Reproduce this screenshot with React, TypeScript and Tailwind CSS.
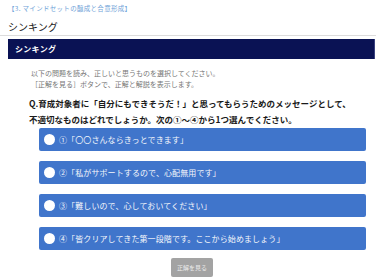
import React from "react";

// ── Data ────────────────────────────────────────────────────────────────────
const OPTIONS = [
  "①「〇〇さんならきっとできます」",
  "②「私がサポートするので、心配無用です」",
  "③「難しいので、心しておいてください」",
  "④「皆クリアしてきた第一段階です。ここから始めましょう」",
];

const FONT = { fontFamily: '"Noto Sans CJK JP", "Noto Sans", sans-serif' };

// ── Component ───────────────────────────────────────────────────────────────
export default function App() {
  return (
    <div className="w-[384px] h-[280px] bg-white overflow-hidden text-[#222]" style={FONT}>
      {/* breadcrumb + title */}
      <div className="pt-[4px] pl-[8px] text-[6.5px] leading-[8px] text-[#6fa3d8] tracking-[0.3px] whitespace-nowrap">
        【3. マインドセットの醸成と合意形成】
      </div>
      <div className="mt-[9px] pl-[8px] text-[10px] leading-[12px] text-[#1a1a1a]">シンキング</div>
      <div className="mt-[2px] w-[376px] h-px bg-[#dcdcdc]" />

      {/* section header */}
      <div className="mt-[3px] ml-[8px] w-[367px] h-[20px] flex items-center pl-[7px] bg-[#0a1254] border-r border-[#3b4280]">
        <span className="text-[8px] font-bold text-white tracking-[0.3px]">シンキング</span>
      </div>

      {/* instructions */}
      <div className="mt-[9px] pl-[31px] text-[7px] leading-[11px] text-[#777]">
        <div>以下の問題を読み、正しいと思うものを選択してください。</div>
        <div>［正解を見る］ボタンで、正解と解説を表示します。</div>
      </div>

      {/* question */}
      <div className="mt-[5px] pl-[29px] text-[8.5px] leading-[16px] font-bold text-[#1a1a1a]">
        <div>Q.育成対象者に「自分にもできそうだ！」と思ってもらうためのメッセージとして、</div>
        <div>不適切なものはどれでしょうか。次の①～④から1つ選んでください。</div>
      </div>

      {/* options */}
      <div className="mt-[1px] ml-[39px] w-[327px] flex flex-col gap-[10px]">
        {OPTIONS.map(o => (
          <div key={o} className="h-[23px] flex items-center rounded-[2px] bg-[#4075cb] pl-[5px]">
            <span className="w-[11px] h-[11px] rounded-full bg-white shrink-0" />
            <span className="ml-[4px] text-[8px] text-[#f5f7fb] whitespace-nowrap tracking-[0.1px]">{o}</span>
          </div>
        ))}
      </div>

      {/* answer button */}
      <div className="mt-[8px] flex justify-center">
        <div className="w-[42px] h-[19px] flex items-center justify-center rounded-[2px] bg-[#a3a3a3] text-[6px] text-[#ececec]">
          正解を見る
        </div>
      </div>
    </div>
  );
}
